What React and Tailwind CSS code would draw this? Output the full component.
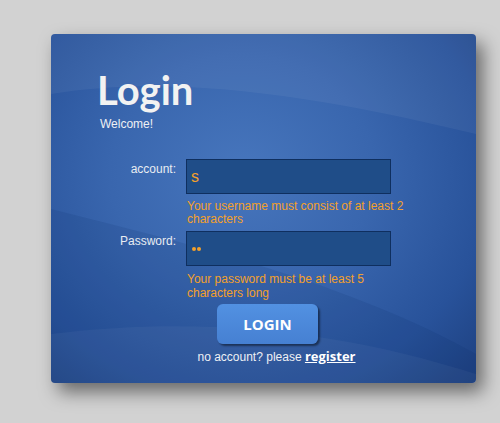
// Login card — static recreation, blue glossy panel on grey page.

export default function App() {
  return (
    <div className="min-h-[423px] w-[500px] overflow-hidden bg-[#d2d2d2] pt-[34px] pl-[51px]" style={{ fontFamily: '"Liberation Sans", Arial, sans-serif' }}>
      <div className="relative h-[349px] w-[425px] overflow-hidden rounded-[4px] bg-[radial-gradient(ellipse_at_45%_40%,#4776bd_0%,#3966ae_40%,#28529a_75%,#1d3f7e_100%)] shadow-[7px_9px_18px_rgba(0,0,0,0.5)]">
        {/* soft light bands */}
        <svg className="pointer-events-none absolute inset-0" width="425" height="349" viewBox="0 0 425 349">
          <path d="M0 60 C120 40 260 60 425 100 L425 0 L0 0 Z" fill="#ffffff" opacity="0.05" />
          <path d="M0 175 C140 210 300 250 425 320 L425 349 L0 349 Z" fill="#0a2660" opacity="0.12" />
          <path d="M0 300 C160 280 300 300 425 340 L425 349 L0 349 Z" fill="#ffffff" opacity="0.04" />
        </svg>

        <div className="relative pl-[46px] pt-[34px]">
          <h1 className="text-[40px] leading-[44px] font-bold text-[#f2f2f2]" style={{ fontFamily: 'Lato, sans-serif' }}>
            Login
          </h1>
          <p className="ml-[3px] mt-[5px] text-[12px] leading-[14px] text-[#eef0f4]">Welcome!</p>
        </div>

        <div className="relative mt-[28px] grid grid-cols-[125px_205px] gap-x-[10px]">
          <label className="pt-[3px] text-right text-[12px] leading-[14px] text-[#e8ecf2]">account:</label>
          <div>
            <div className="flex h-[35px] items-center border border-[#0f2f5f] bg-[#1f4d88] px-[4px] text-[16px] text-[#f4a02a]">
              s
            </div>
            <p className="mt-[6px] w-[226px] pl-[1px] text-[12px] leading-[13px] text-[#f4a02a]">
              Your username must consist of at least 2 characters
            </p>
          </div>

          <label className="mt-[5px] pt-[3px] text-right text-[12px] leading-[14px] text-[#e8ecf2]">Password:</label>
          <div className="mt-[5px]">
            <div className="flex h-[35px] items-center gap-[1px] border border-[#0f2f5f] bg-[#1f4d88] px-[5px]">
              <span className="h-[4px] w-[4px] rounded-full bg-[#f4a02a]" />
              <span className="h-[4px] w-[4px] rounded-full bg-[#f4a02a]" />
            </div>
            <p className="mt-[6px] w-[226px] pl-[1px] text-[12px] leading-[14px] text-[#f4a02a]">
              Your password must be at least 5 characters long
            </p>
          </div>
        </div>

        <div className="relative mt-[4px] flex flex-col items-center pl-[8px]">
          <button
            type="button"
            className="h-[40px] w-[101px] rounded-[6px] bg-[linear-gradient(#5291e2,#4680d2)] text-[15px] font-bold text-white shadow-[2px_2px_2px_rgba(0,0,0,0.45)]"
            style={{ fontFamily: '"Open Sans", sans-serif' }}
          >
            LOGIN
          </button>
          <p className="ml-[18px] mt-[3px] text-[12px] text-[#eef0f4]">
            no account? please{' '}
            <a href="#" className="text-[13px] font-bold text-white underline" style={{ fontFamily: '"Open Sans", sans-serif' }}>
              register
            </a>
          </p>
        </div>
      </div>
    </div>
  );
}
